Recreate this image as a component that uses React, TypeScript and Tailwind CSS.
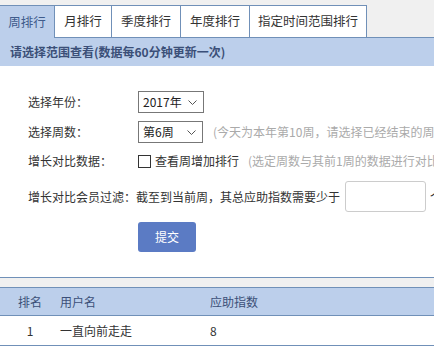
import React from 'react';

const tabs = [
  { label: '周排行', w: 'w-[55px]' },
  { label: '月排行', w: 'w-[57px]' },
  { label: '季度排行', w: 'w-[69px]' },
  { label: '年度排行', w: 'w-[69px]' },
  { label: '指定时间范围排行', w: 'w-[117px]' },
];

function Chevron() {
  return (
    <svg width="9" height="5" viewBox="0 0 9 5" fill="none" stroke="#555" strokeWidth="1">
      <path d="M0.5 0.5l4 4 4-4" />
    </svg>
  );
}

function FakeSelect({ value, w }: { value: string; w: string }) {
  return (
    <div className={`${w} shrink-0 h-[22px] border border-[#777] flex items-center justify-between pl-[4px] pr-[6px] text-[12px] text-[#222] bg-white`}>
      <span>{value}</span>
      <Chevron />
    </div>
  );
}

export default function App() {
  return (
    <div
      className="w-[434px] h-[351px] overflow-hidden bg-white whitespace-nowrap"
      style={{ fontFamily: '"Noto Sans CJK SC", "Noto Sans", sans-serif' }}
    >
      {/* tab strip */}
      <div className="flex items-end bg-[#f0f0f0] pt-[5px] h-[38px]">
        {tabs.map((t, i) => (
          <div
            key={t.label}
            className={`${t.w} shrink-0 h-[33px] flex items-center justify-center text-[12.5px] border-t border-r border-[#7090b8] ${
              i === 0 ? 'bg-[#bccfeb] text-[#3f5c8c]' : 'bg-white text-[#333] border-b'
            }`}
          >
            {t.label}
          </div>
        ))}
        <div className="flex-1 h-full border-b border-[#7090b8]" />
      </div>
      <div className="h-[28px] bg-[#bccfeb] pl-[10px] flex items-center text-[12px] font-bold text-[#3b4f78]">
        请选择范围查看(数据每60分钟更新一次)
      </div>

      {/* form */}
      <div className="pl-[28px] flex flex-col text-[12px] text-[#333]">
        <div className="flex items-center mt-[25px]">
          <span className="w-[110px] shrink-0">选择年份：</span>
          <FakeSelect value="2017年" w="w-[66px]" />
        </div>
        <div className="flex items-center mt-[8px]">
          <span className="w-[110px] shrink-0">选择周数：</span>
          <FakeSelect value="第6周" w="w-[65px]" />
          <span className="ml-[10px] shrink-0 text-[#aaa]">(今天为本年第10周，请选择已经结束的周)</span>
        </div>
        <div className="flex items-center mt-[7px] h-[22px]">
          <span className="w-[110px] shrink-0">增长对比数据：</span>
          <span className="w-[13px] h-[13px] shrink-0 border border-[#333] bg-white" />
          <span className="ml-[4px] shrink-0">查看周增加排行</span>
          <span className="ml-[9px] shrink-0 text-[#aaa]">(选定周数与其前1周的数据进行对比)</span>
        </div>
        <div className="flex items-center mt-[9px]">
          <span className="shrink-0">增长对比会员过滤：截至到当前周，其总应助指数需要少于</span>
          <div className="ml-[5px] shrink-0 w-[81px] h-[31px] border border-[#ccc] rounded-[3px] bg-white" />
          <span className="ml-[4px] shrink-0">个</span>
        </div>
        <div className="pl-[110px] mt-[10px]">
          <button className="w-[58px] h-[30px] rounded-[3px] bg-[#5b7bc4] text-white text-[12px]">提交</button>
        </div>
      </div>

      {/* table */}
      <div className="mt-[25px] border-t border-[#7090b8]">
        <div className="h-[10px] bg-[#f0f0f0] border-b border-[#7090b8]" />
        <div className="grid grid-cols-[60px_150px_1fr] h-[28px] items-center bg-[#bccfeb] text-[12px] text-[#3b4f78] border-b border-[#7090b8]">
          <span className="text-center">排名</span>
          <span>用户名</span>
          <span>应助指数</span>
        </div>
        <div className="grid grid-cols-[60px_150px_1fr] h-[30px] items-center text-[12px] text-[#333] border-b border-[#7090b8]">
          <span className="text-center">1</span>
          <span>一直向前走走</span>
          <span>8</span>
        </div>
      </div>
    </div>
  );
}
